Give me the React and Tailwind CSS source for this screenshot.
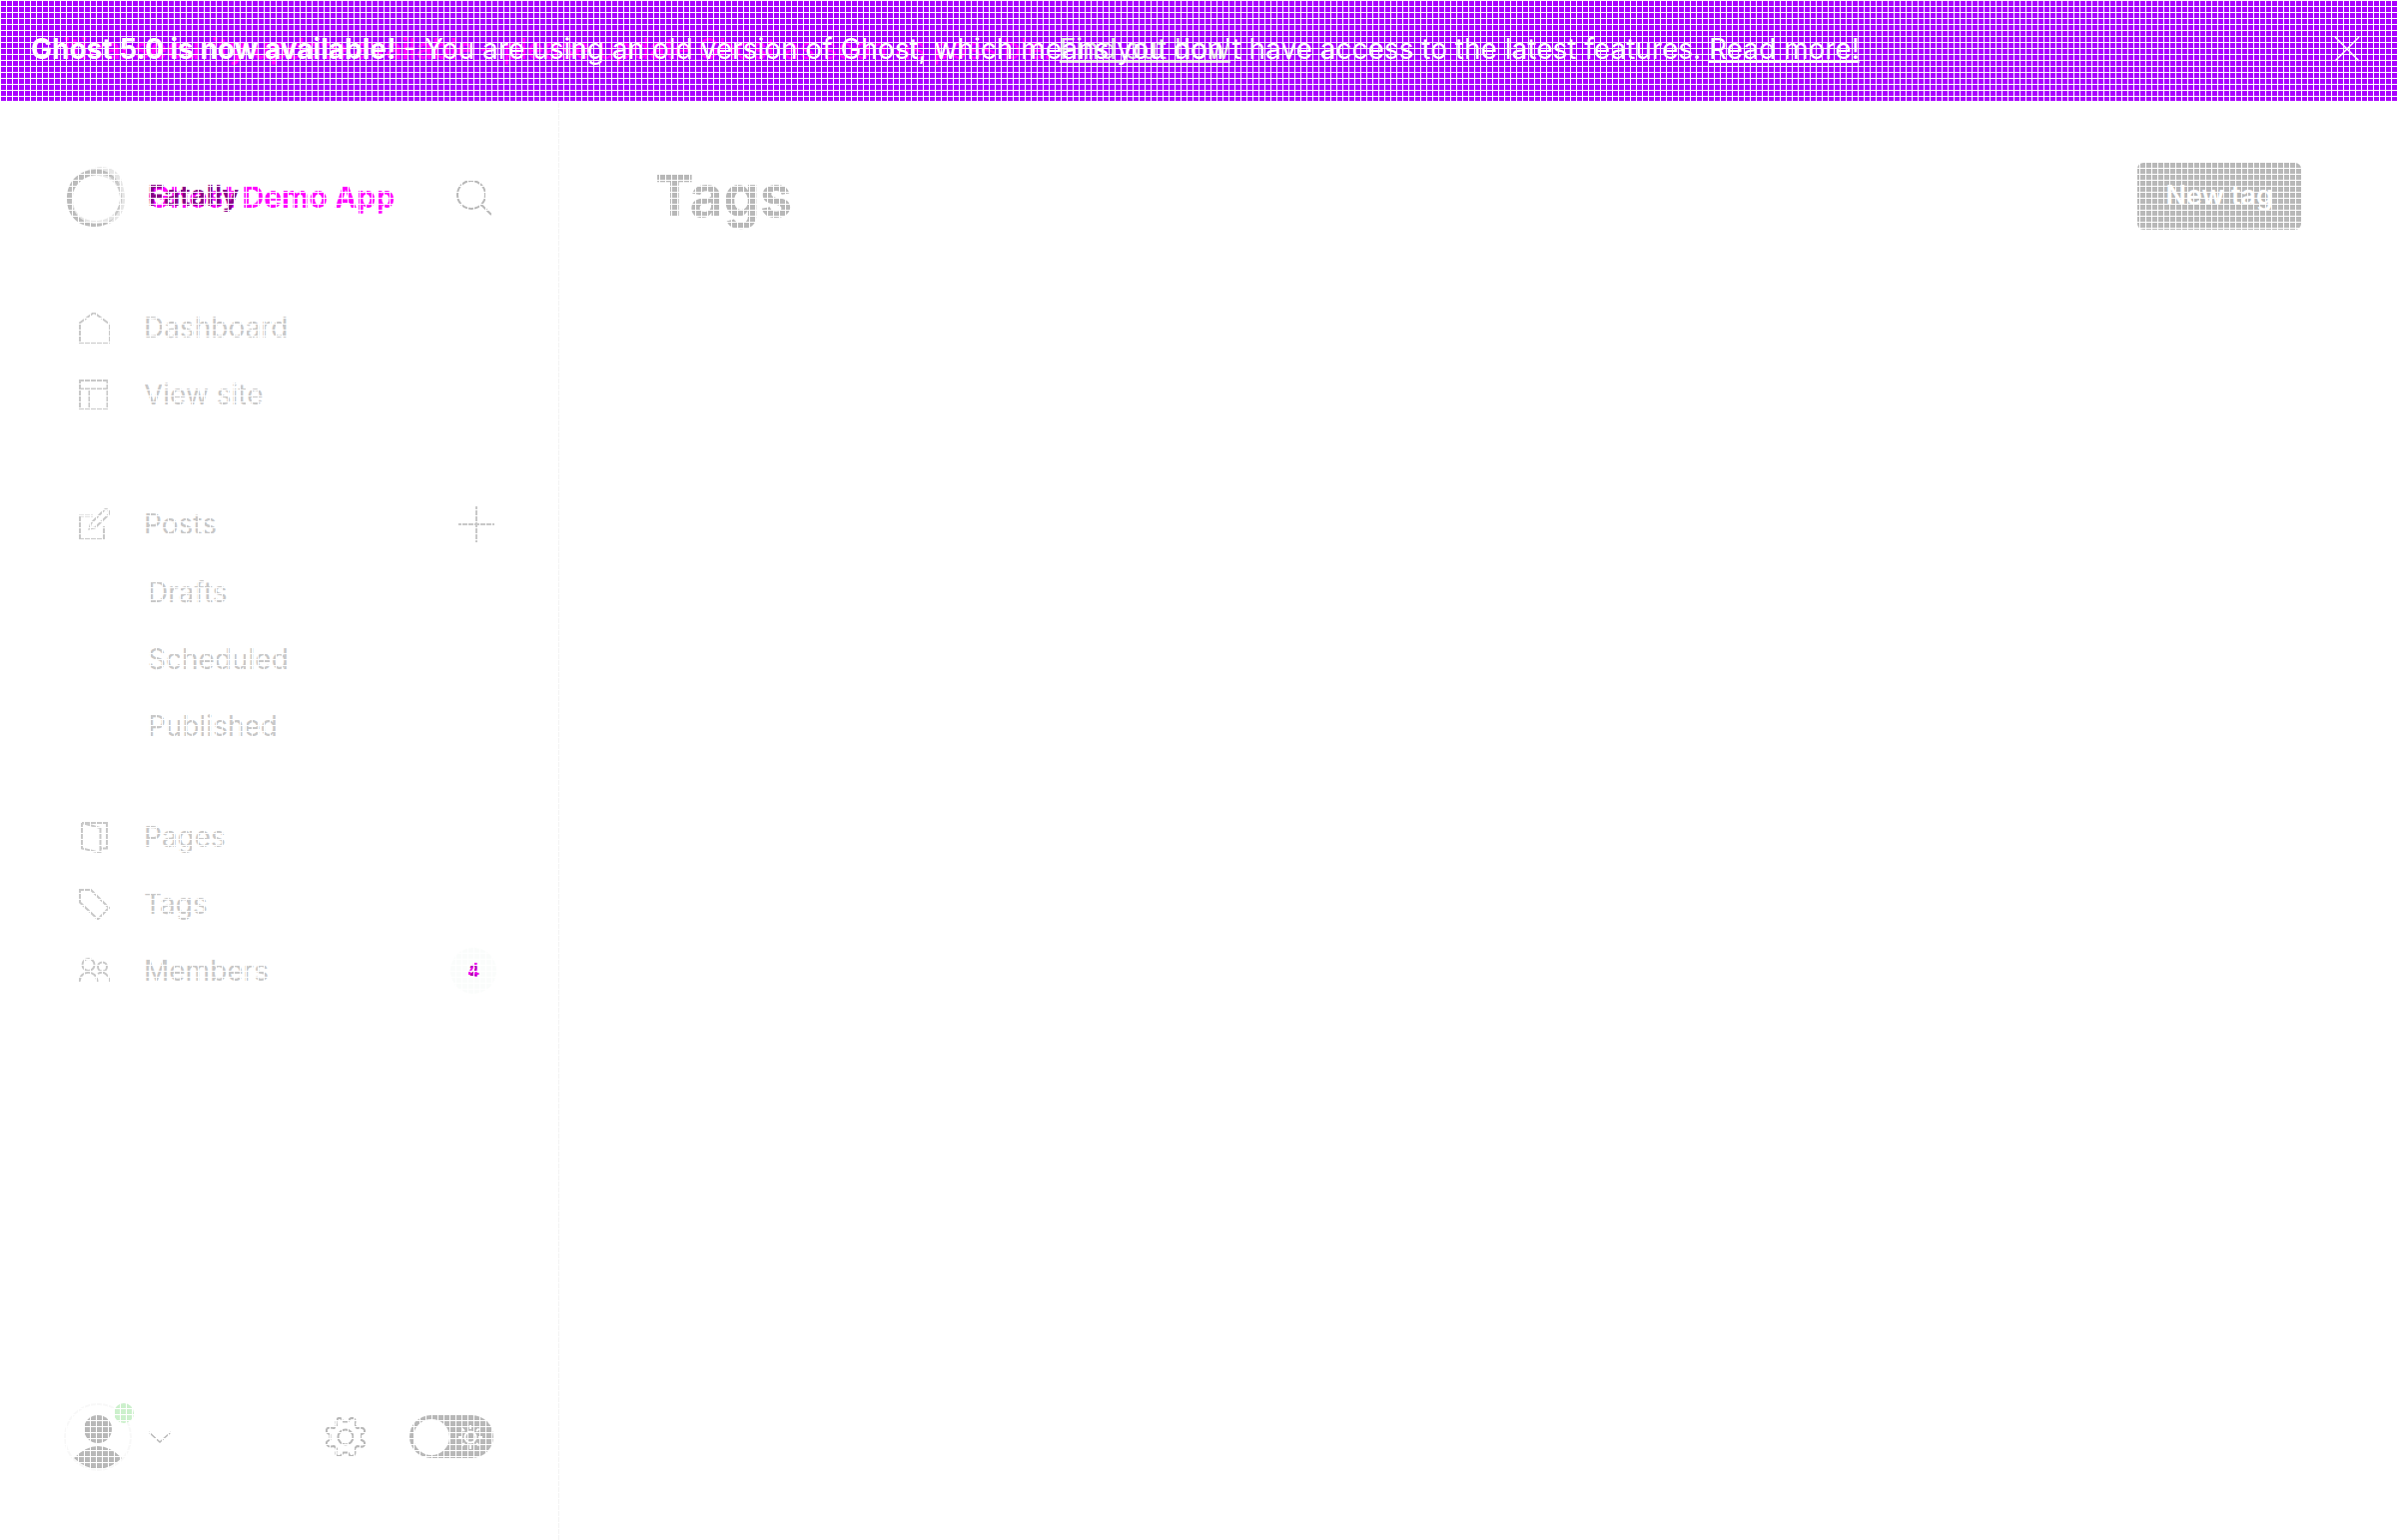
import React from "react";

const stroke = { fill: "none", stroke: "currentColor", strokeWidth: 1.5 };

function Icon({ children, className = "size-8", viewBox = "0 0 32 32" }) {
  return (
    <svg viewBox={viewBox} className={className} {...stroke} aria-hidden="true">
      {children}
    </svg>
  );
}

const icons = {
  home: <path strokeWidth="2" d="M1 12 16 1 31 12M2 12V31H31V12" />,
  site: <path strokeWidth="2" d="M2 2H29.500V30H2ZM2 10.500H29.500M11.500 10.500V30" />,
  edit: <path strokeWidth="2" d="M15 7.500H2V31H26V18M11.500 20.500 13 15 26.500 1.500Q29 0 31 2.500Q32 4.500 30.500 6.500L17 19.500Z" />,
  pages: <path strokeWidth="2" d="M4 2H29V27.500H22M4 2V27.500L21 31.500H22.500V7L4 2" />,
  tag: <path strokeWidth="2" d="M2 2H13L31 20 20 31.500 2 14.500Z" />,
  members: (
    <g strokeWidth="2">
      <circle cx="10.500" cy="10" r="6" />
      <circle cx="24.500" cy="12" r="4.500" />
      <path d="M1.500 27C2 14.500 19 14.500 19.500 27M20 19C26 15 31.500 21 31.500 27" />
    </g>
  ),
};

function NavLink({ icon, children }) {
  return (
    <a href="#" className="flex h-[67px] items-center gap-[34px]">
      <Icon>{icons[icon]}</Icon>
      <span>{children}</span>
    </a>
  );
}

function Banner() {
  return (
    <div className="relative flex h-[101px] items-center justify-between bg-[#aa00ff] pr-[37px] pb-[3px] pl-[31px] text-[28px] text-white">
      <p className="absolute left-[31px] whitespace-nowrap text-[#ff00ff]">
        <b className="font-semibold">Critical security update available</b> – please update Ghost as soon as possible.{" "}
        <a href="#" className="text-[#e4e4e4] underline">Find out how</a>
      </p>
      <p className="relative whitespace-nowrap">
        <b className="font-bold">Ghost 5.0 is now available!</b> - You are using an old version of Ghost, which means you don't have access to the latest features.{" "}
        <a href="#" className="underline">Read more!</a>
      </p>
      <button aria-label="Close">
        <Icon className="size-[26px]" viewBox="0 0 26 26"><path d="M1 1 25 25M25 1 1 25" /></Icon>
      </button>
    </div>
  );
}

function Gear() {
  return (
    <svg viewBox="0 0 40 40" className="size-10" {...stroke} strokeWidth="2" aria-hidden="true">
      <circle cx="20" cy="20" r="7.500" />
      <path strokeLinejoin="round" d="M17.500 4.500H22.500L24 2Q26 0 28.500 1.500Q30 2.500 29.500 5L29 8 31.500 11 35 10.500Q38 10.500 39 13Q39.500 15 38 16L35 17.500V22.500L38 24Q40 26 38.500 28.500Q37.500 30 35 29.500L31.500 29 29 31.500 29.500 35Q29.500 38 27 39Q25 39.500 24 38L22.500 35.500H17.500L16 38Q14 40 11.500 38.500Q10 37.500 10.500 35L11 31.500 8.500 29 5 29.500Q2 29.500 1 27Q0.500 25 2 24L4.500 22.500V17.500L2 16Q0 14 1.500 11.500Q2.500 10 5 10.500L8.500 11 11 8.500 10.500 5Q10.500 2 13 1Q15 0.500 16 2Z" />
    </svg>
  );
}

function ThemeSwitch() {
  return (
    <label className="relative flex h-[43px] w-[84px] cursor-pointer items-center justify-between rounded-full bg-[#b8b8b8] pr-[11px] pl-1">
      <input type="checkbox" aria-label="Night shift" className="absolute inset-0 size-full cursor-pointer appearance-none rounded-full" />
      <span className="size-9 rounded-full bg-white" />
      <svg viewBox="0 0 24 24" className="size-6 text-white" {...stroke} strokeWidth="2" aria-hidden="true">
        <circle cx="12" cy="12" r="5.500" />
        <path d="M12 0V4M12 20V24M0 12H4M20 12H24M3.500 3.500 6 6M18 18 20.500 20.500M3.500 20.500 6 18M18 6 20.500 3.500" />
      </svg>
    </label>
  );
}

function Sidebar() {
  return (
    <aside className="flex w-[560px] shrink-0 flex-col border-r border-[#f3f3f3] pr-[62px] pl-[64px] text-[28px] text-[#c8c8c8]">
      <div className="flex h-[193px] items-center text-[#b8b8b8]">
        <svg viewBox="0 0 62 62" className="size-[62px]" aria-hidden="true">
          <path fillRule="evenodd" fill="#e6e6e6" d="M37 0C51 0 58 9 59 19 64 36 60 51 46 57 32 62 8 56 5 37 2 17 18 1 37 0ZM32 9C18 9 9 20 9 32 9 46 18 54 32 54 46 54 56 44 56 32 56 18 46 9 32 9Z" />
          <path fillRule="evenodd" fill="#bcbcbc" d="M30 3C40 1 52 8 57 20 51 11 43 7 33 8 18 9 8 20 8 33 8 48 20 57 32 57 41 57 48 54 51 50 46 57 38 60 31 60 15 60 3 50 3 32 3 15 14 4 30 3Z" />
          <path fill="none" stroke="#c8c8c8" strokeWidth="2" d="M47 10Q56 16 57 29 58 40 50 50" />
        </svg>
        <div className="relative ml-[22px] text-[30px] font-bold whitespace-nowrap">
          <span className="text-[#ff00ff]">Ghost Demo App</span>
          <span className="absolute left-0 text-[28px] text-[#880088]">Fatally</span>
        </div>
        <button className="mr-1 ml-auto" aria-label="Search">
          <Icon className="size-9" viewBox="0 0 36 36"><circle cx="15" cy="15" r="14" strokeWidth="2" /><path strokeWidth="2" d="m25 25 10 10" /></Icon>
        </button>
      </div>
      <nav className="flex grow flex-col pl-[14px]">
        <NavLink icon="home">Dashboard</NavLink>
        <NavLink icon="site">View site</NavLink>
        <div className="mt-[63px] flex items-center justify-between">
          <NavLink icon="edit">Posts</NavLink>
          <button className="mr-[2px]" aria-label="New post"><Icon className="size-9" viewBox="0 0 36 36"><path strokeWidth="2" d="M18 0V36M0 18H36" /></Icon></button>
        </div>
        <div className="pt-[1px]">
          {["Drafts", "Scheduled", "Published"].map((t) => (
            <a key={t} href="#" className="flex h-[67px] items-center pl-[70px]">{t}</a>
          ))}
        </div>
        <div className="mt-11"><NavLink icon="pages">Pages</NavLink></div>
        <NavLink icon="tag">Tags</NavLink>
        <div className="flex items-center justify-between">
          <NavLink icon="members">Members</NavLink>
          <span className="relative grid size-[46px] place-items-center rounded-full bg-[#fafcfb] text-[20px] font-medium text-[#ee00ee]">
            4
            <span className="absolute text-[14px] text-[#aa00aa]">2</span>
          </span>
        </div>
      </nav>
      <div className="flex h-[207px] items-center text-[#b8b8b8]">
        <button aria-label="Account" className="relative flex items-center">
          <svg viewBox="0 0 68 68" className="size-[68px]" aria-hidden="true">
            <circle cx="34" cy="34" r="33" fill="none" stroke="#f8f8f8" strokeWidth="2" />
            <circle cx="34" cy="26" r="14" fill="currentColor" />
            <path d="M10 55Q34 31 58 55Q34 77 10 55Z" fill="currentColor" />
          </svg>
          <span className="absolute top-0 left-[50px] size-[20px] rounded-full bg-[#ccf0cc]" />
          <Icon className="ml-4 h-3 w-6" viewBox="0 0 24 12"><path d="m1 1 11 10L23 1" /></Icon>
        </button>
        <div className="mr-[3px] ml-auto flex items-center gap-11">
          <button aria-label="Settings"><Gear /></button>
          <ThemeSwitch />
        </div>
      </div>
    </aside>
  );
}

export default function App() {
  return (
    <div className="relative flex min-h-screen flex-col bg-white font-[Inter,sans-serif] [font-optical-sizing:none]">
      <Banner />
      <div className="flex grow">
        <Sidebar />
        <main className="grow px-24">
          <header className="flex h-[190px] items-center justify-between">
            <h1 className="text-[58px] font-bold text-[#b8b8b8]">Tags</h1>
            <button className="h-[67px] rounded-md bg-[#b8b8b8] px-7 text-[27px] font-semibold text-white">New tag</button>
          </header>
        </main>
      </div>
      <div className="pointer-events-none absolute inset-0 bg-[linear-gradient(to_right,white_1px,transparent_1px),linear-gradient(to_bottom,white_1px,transparent_1px)] bg-[size:6px_6px]" />
    </div>
  );
}
